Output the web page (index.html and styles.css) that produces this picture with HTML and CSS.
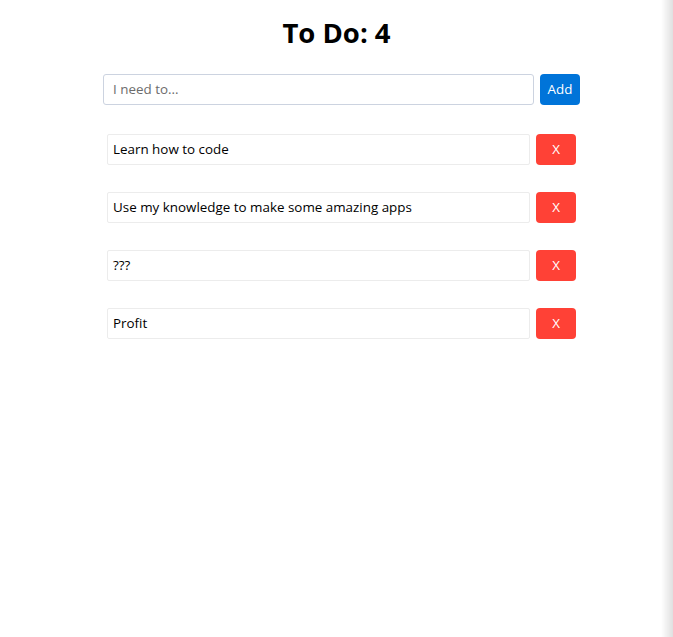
FILE: index.html
```html
<!DOCTYPE html>
<html>
<head>
<meta charset="utf-8">
<link rel="stylesheet" href="styles.css">
</head>
<body>
<div class="page">
  <h1 class="title">To Do: 4</h1>
  <div class="todo">
    <form class="add-form">
      <input class="add-input" type="text" placeholder="I need to...">
      <button class="add-btn" type="button">Add</button>
    </form>
    <ul class="list">
      <li class="item"><span class="item-text">Learn how to code</span><button class="del-btn" type="button">X</button></li>
      <li class="item"><span class="item-text">Use my knowledge to make some amazing apps</span><button class="del-btn" type="button">X</button></li>
      <li class="item"><span class="item-text">???</span><button class="del-btn" type="button">X</button></li>
      <li class="item"><span class="item-text">Profit</span><button class="del-btn" type="button">X</button></li>
    </ul>
  </div>
</div>
<div class="edge-shadow"></div>
</body>
</html>
```

FILE: styles.css
```css
html, body {
  margin: 0;
  padding: 0;
  background: #fff;
}
body {
  font-family: "Open Sans", "Noto Sans", sans-serif;
  font-size: 13.4px;
  color: #000;
}
.page {
  width: 673px;
  padding-top: 15px;
}
.title {
  margin: 0;
  text-align: center;
  font-family: "Open Sans", sans-serif;
  font-weight: 700;
  font-size: 27.5px;
  line-height: 36px;
}
.todo {
  width: 477px;
  margin: 23px 0 0 103px;
}
.add-form {
  display: flex;
  gap: 6px;
  margin: 0;
}
.add-input {
  flex: 1;
  height: 31px;
  box-sizing: border-box;
  border: 1px solid #ccd3e0;
  border-radius: 3px;
  padding: 0 9px 1px;
  font-family: inherit;
  font-size: 13.4px;
  color: #333;
}
.add-input::placeholder {
  color: #6c6c6c;
}
.add-btn {
  width: 40px;
  height: 31px;
  border: none;
  border-radius: 4px;
  background: #0074d9;
  color: #fff;
  font-family: inherit;
  font-size: 13.4px;
  padding: 0 0 1px;
}
.list {
  list-style: none;
  margin: 29px 0 0;
  padding: 0 4px;
  display: flex;
  flex-direction: column;
  gap: 27px;
}
.item {
  display: flex;
  gap: 6px;
  align-items: stretch;
}
.item-text {
  flex: 1;
  height: 31px;
  box-sizing: border-box;
  border: 1px solid #ececec;
  border-radius: 2px;
  padding: 0 5px 1px;
  display: flex;
  align-items: center;
}
.del-btn {
  width: 40px;
  height: 31px;
  border: none;
  border-radius: 4px;
  background: #ff4136;
  color: #fff;
  font-family: inherit;
  font-size: 13.4px;
  padding: 0 0 1px;
}
.edge-shadow {
  position: fixed;
  top: 0;
  right: 0;
  width: 12px;
  height: 100%;
  background: linear-gradient(to right, rgba(0,0,0,0), rgba(0,0,0,0.12));
}
```
